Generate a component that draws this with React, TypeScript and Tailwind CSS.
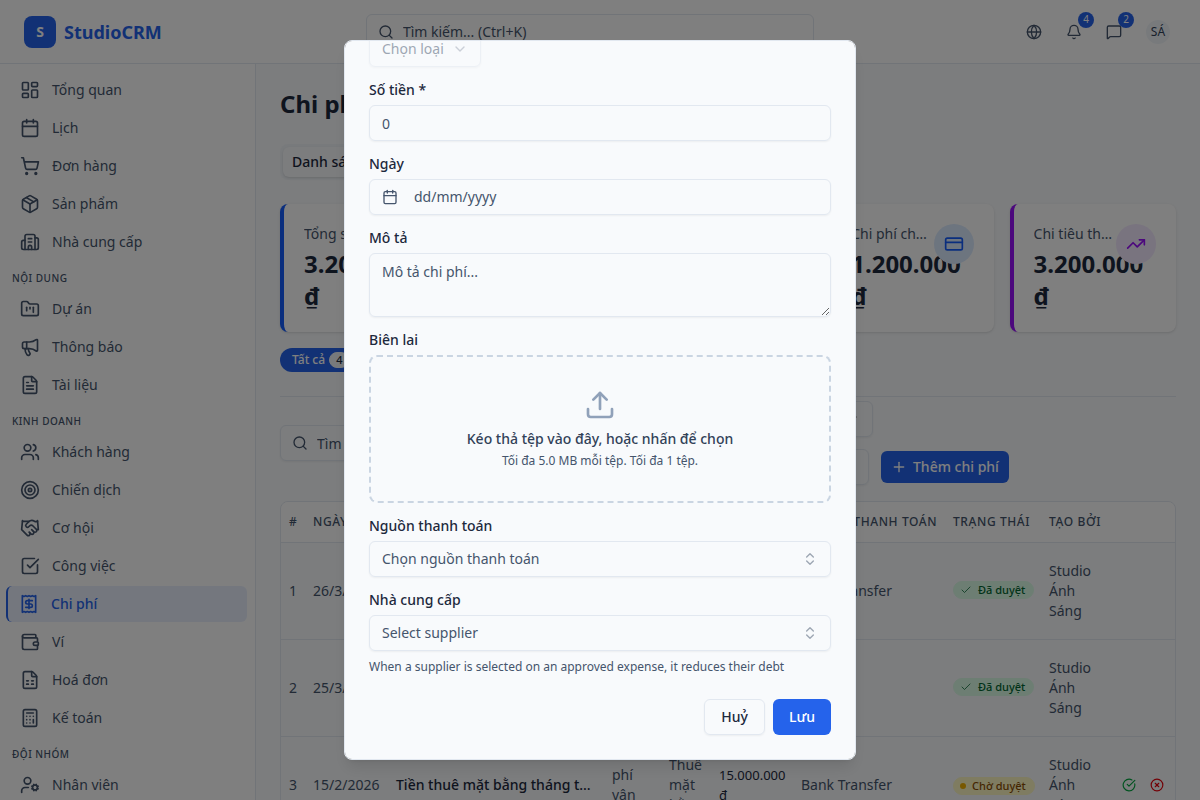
import { useLayoutEffect, useRef, type ReactNode } from 'react'
import {
  Bell,
  Building2,
  Calculator,
  Calendar,
  Check,
  ChevronDown,
  ChevronsUpDown,
  CircleCheckBig,
  CircleX,
  CreditCard,
  FileSpreadsheet,
  FileText,
  FolderKanban,
  Globe,
  Handshake,
  LayoutDashboard,
  Megaphone,
  MessageSquare,
  Package,
  Plus,
  Receipt,
  Search,
  ShoppingCart,
  SquareCheckBig,
  Target,
  TrendingUp,
  Upload,
  UserCog,
  Users,
  Wallet,
  type LucideIcon,
} from 'lucide-react'

const NAV: { title?: string; items: { label: string; icon: LucideIcon; active?: boolean }[] }[] = [
  {
    items: [
      { label: 'Tổng quan', icon: LayoutDashboard },
      { label: 'Lịch', icon: Calendar },
      { label: 'Đơn hàng', icon: ShoppingCart },
      { label: 'Sản phẩm', icon: Package },
      { label: 'Nhà cung cấp', icon: Building2 },
    ],
  },
  {
    title: 'Nội dung',
    items: [
      { label: 'Dự án', icon: FolderKanban },
      { label: 'Thông báo', icon: Megaphone },
      { label: 'Tài liệu', icon: FileText },
    ],
  },
  {
    title: 'Kinh doanh',
    items: [
      { label: 'Khách hàng', icon: Users },
      { label: 'Chiến dịch', icon: Target },
      { label: 'Cơ hội', icon: Handshake },
      { label: 'Công việc', icon: SquareCheckBig },
      { label: 'Chi phí', icon: Receipt, active: true },
      { label: 'Ví', icon: Wallet },
      { label: 'Hoá đơn', icon: FileSpreadsheet },
      { label: 'Kế toán', icon: Calculator },
    ],
  },
  {
    title: 'Đội nhóm',
    items: [{ label: 'Nhân viên', icon: UserCog }],
  },
]

const STATS = [
  { label: 'Tổng số chi phí', value: '3.200.000 ₫', icon: Receipt, border: 'border-l-blue-600', tone: 'bg-blue-100 text-blue-600' },
  { label: 'Đã duyệt', value: '3.200.000 ₫', icon: Check, border: 'border-l-green-600', tone: 'bg-green-100 text-green-600' },
  { label: 'Chờ duyệt', value: '15.000.000 ₫', icon: Wallet, border: 'border-l-amber-500', tone: 'bg-amber-100 text-amber-600' },
  { label: 'Chi phí chung', value: '1.200.000 ₫', icon: CreditCard, border: 'border-l-blue-600', tone: 'bg-blue-100 text-blue-600' },
  { label: 'Chi tiêu tháng', value: '3.200.000 ₫', icon: TrendingUp, border: 'border-l-purple-600', tone: 'bg-purple-100 text-purple-600' },
]

const EXPENSES = [
  { date: '26/3/2026', title: 'Chi phí in ấn', project: 'Dự án', amount: '1.200.000 ₫', source: 'Bank Transfer', approved: true },
  { date: '25/3/2026', title: 'Chi phí đi lại', project: 'Dự án', amount: '2.000.000 ₫', source: '', approved: true },
  { date: '15/2/2026', title: 'Tiền thuê mặt bằng tháng tư 2026', project: 'Thuê mặt bằng', amount: '15.000.000 ₫', source: 'Bank Transfer', approved: false },
]

const FIELD =
  'w-full rounded-md border border-slate-200 bg-transparent px-3 text-sm text-slate-600 shadow-xs outline-none placeholder:text-slate-600'

function Header() {
  return (
    <header className="flex h-16 shrink-0 items-center justify-between border-b border-slate-200 bg-white px-6">
      <a href="#" className="flex items-center gap-2">
        <span className="flex size-8 items-center justify-center rounded-lg bg-[#2563eb] text-sm font-bold text-white">
          S
        </span>
        <span className="text-lg font-bold text-[#2563eb]">StudioCRM</span>
      </a>
      <div className="relative w-full max-w-md">
        <Search className="absolute top-1/2 left-3 size-4 -translate-y-1/2 text-slate-600" />
        <input
          aria-label="Tìm kiếm"
          placeholder="Tìm kiếm... (Ctrl+K)"
          className="h-9 w-full rounded-md border border-slate-200 pr-3 pl-9 text-sm placeholder:text-slate-600"
        />
      </div>
      <div className="flex items-center gap-2.5 text-slate-600">
        <div className="flex items-center gap-2">
          <button aria-label="Ngôn ngữ" className="flex size-8 items-center justify-center">
            <Globe className="size-4" />
          </button>
          <HeaderAlert label="Thông báo" icon={Bell} count={4} />
          <HeaderAlert label="Tin nhắn" icon={MessageSquare} count={2} />
        </div>
        <button className="flex h-8 w-9 items-center justify-center">
          <span className="flex size-6 items-center justify-center rounded-full bg-slate-100 text-xs text-slate-700">SÁ</span>
        </button>
      </div>
    </header>
  )
}

function HeaderAlert({ label, icon: Icon, count }: { label: string; icon: LucideIcon; count: number }) {
  return (
    <button aria-label={label} className="relative flex size-8 items-center justify-center">
      <Icon className="size-4" />
      <span className="absolute -top-1 -right-1 flex size-4 items-center justify-center rounded-full bg-[#2563eb] text-[10px] text-white">
        {count}
      </span>
    </button>
  )
}

function Sidebar() {
  return (
    <nav className="w-64 shrink-0 overflow-hidden border-r border-slate-200 bg-white p-2">
      {NAV.map((group, i) => (
        <div key={i}>
          {group.title && (
            <h2 className="mt-2.5 mb-1 px-1 text-[10px] leading-[17px] font-medium tracking-wider text-slate-600 uppercase">
              {group.title}
            </h2>
          )}
          <ul className="flex flex-col gap-0.5">
            {group.items.map(({ label, icon: Icon, active }) => (
              <li key={label}>
                <a
                  href="#"
                  className={`flex h-9 items-center gap-3 rounded-md text-sm ${
                    active
                      ? '-ml-0.5 border-l-2 border-[#2563eb] bg-[#2563eb]/10 pl-[11px] font-medium text-[#2563eb]'
                      : 'px-3 text-slate-600'
                  }`}
                >
                  <Icon className="size-5 shrink-0" />
                  {label}
                </a>
              </li>
            ))}
          </ul>
        </div>
      ))}
    </nav>
  )
}

function StatCard({ label, value, icon: Icon, border, tone }: (typeof STATS)[number]) {
  return (
    <div className={`flex items-start rounded-lg border-l-4 bg-white p-5 shadow-sm ${border}`}>
      <div className="min-w-0 flex-1">
        <p className="truncate text-sm text-slate-600">{label}</p>
        <p className="mt-1 text-2xl font-bold text-slate-800">{value}</p>
      </div>
      <div className={`flex size-10 shrink-0 items-center justify-center rounded-full ${tone}`}>
        <Icon className="size-5" />
      </div>
    </div>
  )
}

function FilterSelect({ label, className }: { label: string; className: string }) {
  return (
    <div className={`relative ${className}`}>
      <select aria-label={label} className="h-9 w-full appearance-none rounded-md border border-slate-200 px-3 text-sm text-slate-600 shadow-xs">
        <option>{label}</option>
      </select>
      <ChevronDown className="pointer-events-none absolute top-2.5 right-[13px] size-4 opacity-50" />
    </div>
  )
}

function StatusBadge({ approved }: { approved: boolean }) {
  return approved ? (
    <span className="inline-flex items-center gap-1.5 rounded-full border border-green-100 bg-green-100 pr-2 pl-1.5 text-[11px] leading-4 font-medium whitespace-nowrap text-green-800">
      <Check className="size-3" strokeWidth={1.5} />
      Đã duyệt
    </span>
  ) : (
    <span className="inline-flex items-center gap-1.5 rounded-full border border-yellow-100 bg-yellow-100 pr-2 pl-1.5 text-[11px] leading-4 font-medium whitespace-nowrap text-yellow-800">
      <span className="size-1.5 rounded-full bg-yellow-500" />
      Chờ duyệt
    </span>
  )
}

function ExpenseTable() {
  return (
    <div className="mt-4 overflow-hidden rounded-lg border border-slate-200">
      <table className="w-full table-fixed text-left text-sm text-slate-600">
        <colgroup>
          <col className="w-[24px]" />
          <col className="w-[83px]" />
          <col className="w-[216px]" />
          <col className="w-[57px]" />
          <col className="w-[50px]" />
          <col className="w-[82px]" />
          <col className="w-[152px]" />
          <col className="w-[96px]" />
          <col className="w-[68px]" />
          <col />
        </colgroup>
        <thead className="bg-white">
          <tr className="h-10 border-b border-slate-200 text-xs tracking-wider whitespace-nowrap uppercase [&>th]:px-2 [&>th]:font-medium">
            <th>#</th>
            <th>Ngày</th>
            <th>Tiêu đề</th>
            <th>Loại</th>
            <th>Mục</th>
            <th className="truncate">Số tiền</th>
            <th>Nguồn thanh toán</th>
            <th>Trạng thái</th>
            <th>Tạo bởi</th>
            <th />
          </tr>
        </thead>
        <tbody>
          {EXPENSES.map((row, i) => (
            <tr key={row.date} className="border-b border-slate-200 [&>td]:p-2">
              <td>{i + 1}</td>
              <td>{row.date}</td>
              <td className="truncate font-medium text-slate-800">{row.title}</td>
              <td>Chi phí vận hành</td>
              <td>{row.project}</td>
              <td className="text-[13px] leading-5 text-slate-800">{row.amount}</td>
              <td>{row.source}</td>
              <td>
                <StatusBadge approved={row.approved} />
              </td>
              <td>Studio Ánh Sáng</td>
              <td>
                {!row.approved && (
                  <div className="flex gap-1">
                    <button aria-label="Duyệt" className="flex size-6 shrink-0 items-center justify-center text-green-600">
                      <CircleCheckBig className="size-3.5" />
                    </button>
                    <button aria-label="Từ chối" className="flex size-6 shrink-0 items-center justify-center text-red-600">
                      <CircleX className="size-3.5" />
                    </button>
                  </div>
                )}
              </td>
            </tr>
          ))}
        </tbody>
      </table>
    </div>
  )
}

function ExpensesPage() {
  return (
    <main className="min-w-0 flex-1 overflow-hidden bg-slate-50 p-6">
      <h1 className="text-2xl font-bold text-slate-800">Chi phí</h1>
      <div role="tablist" className="mt-6 inline-flex h-9 rounded-lg bg-slate-100 p-[3px] align-top">
        <button role="tab" className="rounded-md border border-transparent bg-slate-50 px-2 text-sm font-medium text-slate-800 shadow-sm">
          Danh sách
        </button>
      </div>
      <div className="mt-6 grid grid-cols-5 gap-4">
        {STATS.map((stat) => (
          <StatCard key={stat.label} {...stat} />
        ))}
      </div>
      <div className="mt-4 flex border-b border-slate-200 pb-6">
        <button className="flex h-6 items-center gap-1 rounded-full bg-[#2563eb] px-3 text-xs font-medium text-white">
          Tất cả
          <span className="rounded-full border border-slate-100 bg-slate-100 px-1.5 text-[11px] leading-[14px] text-slate-800">
            4
          </span>
        </button>
      </div>
      <div className="mt-1 flex items-center gap-3">
        <div className="relative w-64 shrink-0">
          <Search className="absolute top-1/2 left-3 size-4 -translate-y-1/2 text-slate-600" />
          <input
            aria-label="Tìm chi phí"
            placeholder="Tìm chi phí..."
            className="h-9 w-full rounded-md border border-slate-200 pr-3 pl-9 text-sm shadow-xs placeholder:text-slate-600"
          />
        </div>
        <div className="flex flex-col gap-3">
          <div className="flex gap-3">
            <FilterSelect label="Loại" className="w-[156px]" />
            <FilterSelect label="Nguồn" className="w-[157px]" />
          </div>
          <div className="flex items-center gap-3">
            <input
              aria-label="Khoảng ngày"
              className="h-9 w-[321px] rounded-md border border-slate-200 px-3 text-sm shadow-xs"
            />
            <button className="flex h-8 items-center gap-1.5 rounded-md bg-[#2563eb] px-2.5 text-sm font-medium text-white">
              <Plus className="size-4" />
              Thêm chi phí
            </button>
          </div>
        </div>
      </div>
      <ExpenseTable />
    </main>
  )
}

function Field({ id, label, children }: { id: string; label: string; children: ReactNode }) {
  return (
    <div className="flex flex-col gap-2">
      <label htmlFor={id} className="text-sm leading-none font-medium text-slate-800">
        {label}
      </label>
      {children}
    </div>
  )
}

function ComboField({ id, label, placeholder }: { id: string; label: string; placeholder: string }) {
  return (
    <Field id={id} label={label}>
      <div className="relative">
        <select id={id} className={`h-9 appearance-none ${FIELD}`}>
          <option>{placeholder}</option>
        </select>
        <ChevronsUpDown className="pointer-events-none absolute top-2.5 right-[13px] size-4 text-slate-600 opacity-50" />
      </div>
    </Field>
  )
}

function ExpenseDialog() {
  const bodyRef = useRef<HTMLDivElement>(null)

  useLayoutEffect(() => {
    const el = bodyRef.current
    if (el) el.scrollTop = el.scrollHeight
  }, [])

  return (
    <div className="fixed inset-0 z-50 flex items-center justify-center bg-black/50">
      <div
        ref={bodyRef}
        role="dialog"
        aria-modal="true"
        aria-label="Thêm chi phí"
        className="max-h-[90vh] w-full max-w-lg overflow-y-auto rounded-lg border border-slate-200 bg-slate-50 p-6 shadow-lg [scrollbar-width:none]"
      >
        <h2 className="mb-4 text-lg font-semibold text-slate-800">Thêm chi phí</h2>
        <form className="flex flex-col gap-4" onSubmit={(e) => e.preventDefault()}>
          <Field id="category" label="Loại *">
            <div className="relative w-28 opacity-50">
              <select id="category" disabled className={`h-9 appearance-none ${FIELD}`}>
                <option>Chọn loại</option>
              </select>
              <ChevronDown className="pointer-events-none absolute top-2.5 right-[13px] size-4 text-slate-600 opacity-50" />
            </div>
          </Field>
          <Field id="amount" label="Số tiền *">
            <input id="amount" placeholder="0" className={`h-9 ${FIELD}`} />
          </Field>
          <Field id="date" label="Ngày">
            <button id="date" type="button" className={`flex h-9 items-center gap-4 ${FIELD}`}>
              <Calendar className="size-4" />
              dd/mm/yyyy
            </button>
          </Field>
          <Field id="description" label="Mô tả">
            <textarea id="description" placeholder="Mô tả chi phí..." className={`h-16 py-2 ${FIELD}`} />
          </Field>
          <Field id="receipt" label="Biên lai">
            <button
              id="receipt"
              type="button"
              className="flex flex-col items-center rounded-lg border-2 border-dashed border-slate-300 p-8"
            >
              <Upload className="size-8 text-slate-400" />
              <span className="mt-2 text-sm font-medium text-slate-700">Kéo thả tệp vào đây, hoặc nhấn để chọn</span>
              <span className="mt-1 text-xs text-slate-600">Tối đa 5.0 MB mỗi tệp. Tối đa 1 tệp.</span>
            </button>
          </Field>
          <ComboField id="source" label="Nguồn thanh toán" placeholder="Chọn nguồn thanh toán" />
          <div className="flex flex-col gap-2">
            <ComboField id="supplier" label="Nhà cung cấp" placeholder="Select supplier" />
            <p className="text-xs text-slate-600">When a supplier is selected on an approved expense, it reduces their debt</p>
          </div>
          <div className="flex justify-end gap-2 pt-2">
            <button type="button" className="h-9 rounded-md border border-slate-200 px-4 text-sm font-medium text-slate-800 shadow-xs">
              Huỷ
            </button>
            <button type="submit" className="h-9 rounded-md bg-[#2563eb] px-4 text-sm font-medium text-white">
              Lưu
            </button>
          </div>
        </form>
      </div>
    </div>
  )
}

export default function App() {
  return (
    <div className="flex h-screen flex-col overflow-hidden font-['Noto_Sans',sans-serif]">
      <Header />
      <div className="flex min-h-0 flex-1">
        <Sidebar />
        <ExpensesPage />
      </div>
      <ExpenseDialog />
    </div>
  )
}
